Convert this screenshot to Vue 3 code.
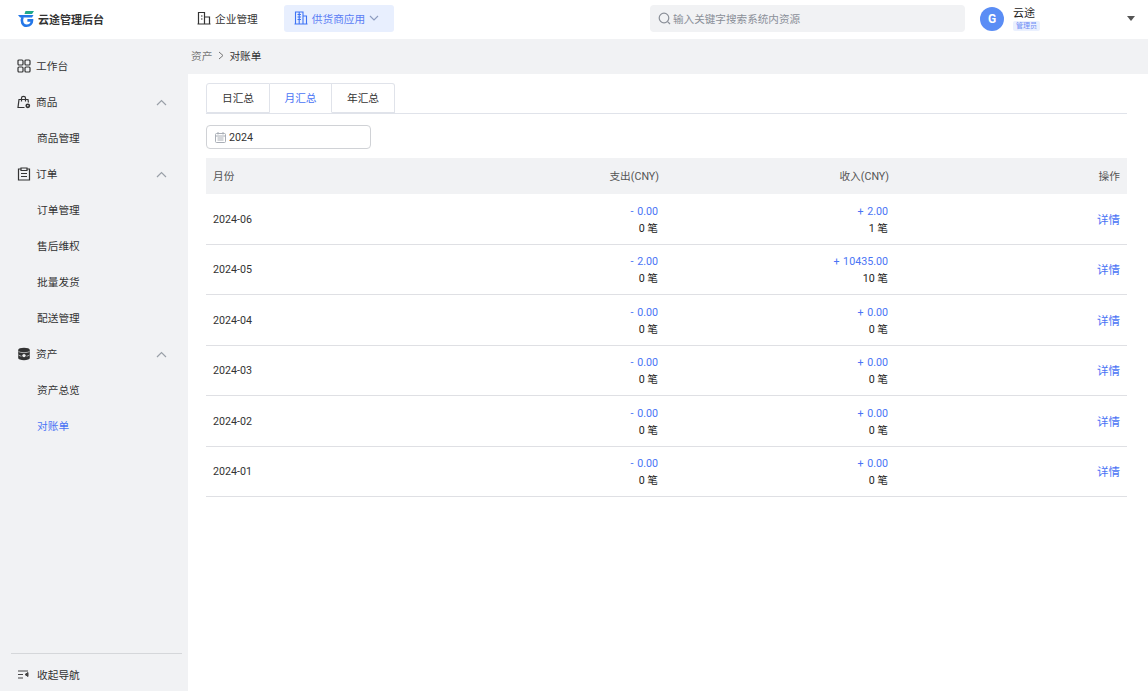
<template>
  <div class="page">
    <header class="topbar">
      <div class="logo">
        <svg width="18" height="18" viewBox="0 0 18 18" fill="none">
          <path d="M8.5 1H17L15 4H7.5Z" fill="#1fa88a" />
          <path d="M1 5H16.5L15 7.6H3Z" fill="#2477e8" />
          <path d="M5.6 7C3.8 11 5.4 15.8 9.6 15.8C13 15.8 15 13.4 15 10.4H10.4" stroke="#2477e8" stroke-width="2.6" />
        </svg>
        <span>云途管理后台</span>
      </div>
      <div class="topnav">
        <div class="topnav-item">
          <svg width="14" height="14" viewBox="0 0 14 14" fill="none" stroke="#333" stroke-width="1.2">
            <path d="M1.5 13V1.5H7.5V13M7.5 6H12.5V13M0.5 13H13.5M4 5H5.5M4 8H5.5" />
          </svg>
          <span>企业管理</span>
        </div>
        <div class="topnav-item active">
          <svg width="14" height="14" viewBox="0 0 14 14" fill="none" stroke="#3e74f5" stroke-width="1.1">
            <path d="M1.5 13V1H9V13M9 5H12.5V13M0.5 13H13.5M3.5 3.5H7M3.5 6H7M3.5 8.5H7M5.2 1V13" />
          </svg>
          <span>供货商应用</span>
          <svg width="10" height="6" viewBox="0 0 10 6" fill="none" stroke="#8c9cc0" stroke-width="1.1">
            <path d="M1 1L5 5L9 1" />
          </svg>
        </div>
      </div>
      <div class="search">
        <svg width="13" height="13" viewBox="0 0 13 13" fill="none" stroke="#8a8f98" stroke-width="1.2">
          <circle cx="6" cy="6" r="4.8" />
          <path d="M9.6 9.6L12 12" />
        </svg>
        <span>输入关键字搜索系统内资源</span>
      </div>
      <div class="user">
        <div class="avatar">G</div>
        <div class="user-text">
          <div class="user-name">云途</div>
          <div class="user-role">管理员</div>
        </div>
        <div class="caret"></div>
      </div>
    </header>

    <div class="body">
      <aside class="sidebar">
        <nav class="menu">
          <template v-for="item in menu" :key="item.name">
            <div class="menu-row">
              <svg class="menu-icon" width="14" height="14" viewBox="0 0 14 14" fill="none" stroke="#333" stroke-width="1.2" v-html="item.icon"></svg>
              <span>{{ item.name }}</span>
              <svg v-if="item.children" class="menu-arrow" width="11" height="7" viewBox="0 0 11 7" fill="none" stroke="#9aa0a8" stroke-width="1.2">
                <path d="M1 6L5.5 1.5L10 6" />
              </svg>
            </div>
            <div
              v-for="child in item.children"
              :key="child"
              class="menu-row sub"
              :class="{ current: child === '对账单' }"
            >{{ child }}</div>
          </template>
        </nav>
        <div class="collapse">
          <div class="collapse-row">
            <svg width="11" height="9" viewBox="0 0 11 9" fill="none" stroke="#444" stroke-width="1">
              <path d="M0 1H10M0 4.5H5M0 8H5" />
              <path d="M10 2.5V6.5L7 4.5Z" fill="#444" />
            </svg>
            <span>收起导航</span>
          </div>
        </div>
      </aside>

      <main class="main">
        <div class="crumbs">
          <span class="crumb-parent">资产</span>
          <svg width="6" height="9" viewBox="0 0 6 9" fill="none" stroke="#777" stroke-width="1">
            <path d="M1 1L5 4.5L1 8" />
          </svg>
          <span>对账单</span>
        </div>
        <section class="content">
          <div class="tabs">
            <div v-for="t in tabs" :key="t" class="tab" :class="{ on: t === '月汇总' }">{{ t }}</div>
          </div>
          <div class="picker">
            <svg width="11" height="11" viewBox="0 0 11 11" fill="none" stroke="#a9aeb6" stroke-width="1">
              <rect x="0.5" y="1.5" width="10" height="9" rx="1" />
              <path d="M0.5 4H10.5M3 0V2.5M8 0V2.5M2.5 6H8.5M2.5 8H8.5" />
            </svg>
            <span>2024</span>
          </div>
          <div class="table">
            <div class="tr head">
              <div>月份</div>
              <div class="r">支出(CNY)</div>
              <div class="r">收入(CNY)</div>
              <div class="r">操作</div>
            </div>
            <div v-for="row in rows" :key="row.month" class="tr">
              <div class="month">{{ row.month }}</div>
              <div class="r amount">
                <div class="money">- {{ row.outAmt }}</div>
                <div>{{ row.outNum }} 笔</div>
              </div>
              <div class="r amount">
                <div class="money">+ {{ row.inAmt }}</div>
                <div>{{ row.inNum }} 笔</div>
              </div>
              <div class="r link">详情</div>
            </div>
          </div>
        </section>
      </main>
    </div>
  </div>
</template>

<script setup>
const tabs = ['日汇总', '月汇总', '年汇总']

const menu = [
  {
    name: '工作台',
    icon: '<rect x="1" y="1" width="5" height="5" rx="1"/><rect x="8" y="1" width="5" height="5" rx="1"/><rect x="1" y="8" width="5" height="5" rx="1"/><rect x="8" y="8" width="5" height="5" rx="1"/>'
  },
  {
    name: '商品',
    icon: '<path d="M7.5 12.5H1L2 4.5H11L11.4 7.5M4.5 6.5V3C4.5 0.8 8.5 0.8 8.5 3V6.5"/><circle cx="10.8" cy="10.8" r="1.6" stroke-width="1.6"/>',
    children: ['商品管理']
  },
  {
    name: '订单',
    icon: '<path d="M4 2H1.5V13H12.5V2H10M4 1H10V3.5H4ZM4 6.5H10M4 9.5H10"/>',
    children: ['订单管理', '售后维权', '批量发货', '配送管理']
  },
  {
    name: '资产',
    icon: '<path d="M1.2 3C1.2 1.6 3.8 0.8 7 0.8S12.8 1.6 12.8 3V11C12.8 12.4 10.2 13.2 7 13.2S1.2 12.4 1.2 11Z" fill="#333" stroke="none"/><path d="M1.5 4.6C3.5 6 10.5 6 12.5 4.6M1.5 8C2.5 8.8 3.5 9 4.5 9.2M12.5 8C11.5 8.8 10.5 9 9.5 9.2" stroke="#ccc" stroke-width="0.8"/><circle cx="7" cy="8.6" r="1.7" fill="#eee" stroke="none"/>',
    children: ['资产总览', '对账单']
  }
]

const rows = [
  { month: '2024-06', outAmt: '0.00', outNum: 0, inAmt: '2.00', inNum: 1 },
  { month: '2024-05', outAmt: '2.00', outNum: 0, inAmt: '10435.00', inNum: 10 },
  { month: '2024-04', outAmt: '0.00', outNum: 0, inAmt: '0.00', inNum: 0 },
  { month: '2024-03', outAmt: '0.00', outNum: 0, inAmt: '0.00', inNum: 0 },
  { month: '2024-02', outAmt: '0.00', outNum: 0, inAmt: '0.00', inNum: 0 },
  { month: '2024-01', outAmt: '0.00', outNum: 0, inAmt: '0.00', inNum: 0 }
]
</script>

<style>
html,
body {
  margin: 0;
  height: 100%;
  overflow: hidden;
}
</style>

<style scoped>
.page {
  width: 1148px;
  height: 691px;
  display: flex;
  flex-direction: column;
  font-family: Roboto, "Noto Sans CJK SC", sans-serif;
  font-size: 10.7px;
  color: #333;
  background: #fff;
}

.topbar {
  height: 39px;
  flex: none;
  box-sizing: border-box;
  padding-bottom: 2px;
  display: flex;
  align-items: center;
  background: #fff;
}

.logo {
  width: 197px;
  padding-left: 17px;
  box-sizing: border-box;
  display: flex;
  align-items: center;
  gap: 3px;
  font-size: 11px;
  font-weight: 700;
  color: #333;
}

.topnav {
  display: flex;
  align-items: center;
  gap: 26px;
  width: 453px;
}

.topnav-item {
  display: flex;
  align-items: center;
  gap: 4px;
  height: 27px;
  box-sizing: border-box;
  padding-bottom: 1px;
}

.topnav-item.active {
  width: 110px;
  padding-left: 10px;
  gap: 4px;
  color: #5a7df5;
  background: #e8effe;
  border-radius: 3px;
}

.search {
  width: 315px;
  height: 27px;
  box-sizing: border-box;
  padding: 0 0 1px 8px;
  display: flex;
  align-items: center;
  gap: 2px;
  background: #f1f2f4;
  border-radius: 4px;
  color: #8a8f98;
  font-size: 10.6px;
}

.user {
  display: flex;
  align-items: center;
  margin-left: 15px;
  width: 168px;
}

.avatar {
  width: 24px;
  height: 24px;
  border-radius: 50%;
  background: #5a8df5;
  color: #fff;
  font-weight: 700;
  font-size: 12px;
  display: flex;
  align-items: center;
  justify-content: center;
}

.user-text {
  margin-left: 9px;
}

.user-name {
  font-size: 11px;
  line-height: 13px;
  color: #222;
}

.user-role {
  margin-top: 1px;
  width: 27px;
  height: 10px;
  line-height: 10px;
  font-size: 7px;
  text-align: center;
  color: #6f8df5;
  background: #eaf0fe;
  border-radius: 2px;
}

.caret {
  margin-left: auto;
  margin-right: 13px;
  width: 0;
  height: 0;
  border-left: 4px solid transparent;
  border-right: 4px solid transparent;
  border-top: 5px solid #555;
}

.body {
  flex: 1;
  display: flex;
  min-height: 0;
}

.sidebar {
  width: 188px;
  flex: none;
  background: #f1f2f4;
  display: flex;
  flex-direction: column;
}

.menu {
  flex: 1;
  padding-top: 9px;
}

.menu-row {
  height: 36px;
  box-sizing: border-box;
  padding-bottom: 2px;
  display: flex;
  align-items: center;
  padding-left: 17px;
  gap: 5px;
  position: relative;
  color: #333;
}

.menu-row.sub {
  padding-left: 37px;
}

.menu-row.current {
  color: #4a74f5;
}

.menu-icon {
  flex: none;
  margin-top: 2px;
}

.menu-arrow {
  position: absolute;
  right: 21px;
  top: 15px;
}

.collapse {
  margin: 0 6px 0 11px;
  border-top: 1px solid #d5d7da;
  height: 37px;
}

.collapse-row {
  height: 41px;
  padding-left: 7px;
  display: flex;
  align-items: center;
  gap: 8px;
}

.main {
  flex: 1;
  display: flex;
  flex-direction: column;
  min-width: 0;
}

.crumbs {
  height: 35px;
  flex: none;
  box-sizing: border-box;
  padding-bottom: 3px;
  background: #f1f2f4;
  padding-left: 3px;
  display: flex;
  align-items: center;
  gap: 5.5px;
  color: #333;
}

.crumb-parent {
  color: #777;
}

.content {
  flex: 1;
  background: #fff;
  padding: 9px 21px 0 18px;
}

.tabs {
  display: flex;
  height: 30px;
  border-bottom: 1px solid #e0e3ea;
}

.tab {
  width: 62px;
  height: 30px;
  box-sizing: border-box;
  display: flex;
  align-items: center;
  justify-content: center;
  padding-bottom: 1px;
  border: 1px solid #e0e3ea;
  border-left: 0;
  background: #fff;
}

.tab:first-child {
  border-left: 1px solid #e0e3ea;
  border-radius: 3px 0 0 0;
  width: 64px;
}

.tab:last-child {
  border-radius: 0 3px 0 0;
  width: 63px;
}

.tab.on {
  color: #4a74f5;
  border-bottom-color: #fff;
}

.picker {
  margin-top: 11px;
  width: 165px;
  height: 24px;
  box-sizing: border-box;
  border: 1px solid #d0d2d6;
  border-radius: 4px;
  padding-left: 8px;
  display: flex;
  align-items: center;
  gap: 3px;
}

.table {
  margin-top: 9px;
}

.tr {
  height: 50.5px;
  box-sizing: border-box;
  display: grid;
  grid-template-columns: 1fr 227px 230px 231px;
  align-items: center;
  padding: 0 7px;
  border-bottom: 1px solid #dfe0e4;
}

.tr.head {
  height: 36px;
  padding-bottom: 2px;
  background: #f1f2f4;
  border-bottom: 0;
  color: #555;
}

.month {
  padding-top: 1px;
}

.r {
  text-align: right;
}

.amount {
  line-height: 17px;
  padding: 2px 1px 0 0;
  color: #222;
}

.money {
  color: #4a74f5;
  word-spacing: 1px;
}

.link {
  color: #4a74f5;
  font-size: 11.5px;
}
</style>
